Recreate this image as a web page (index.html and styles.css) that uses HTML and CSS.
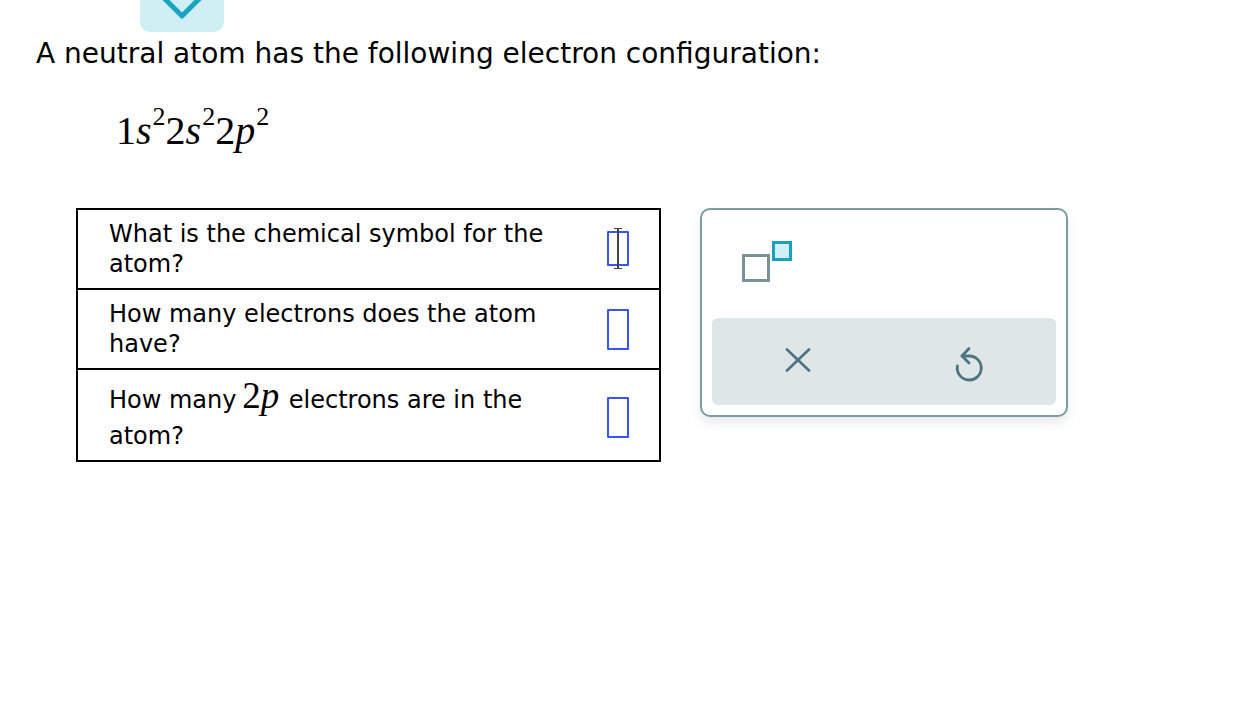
FILE: index.html
```html
<!DOCTYPE html>
<html>
<head>
<meta charset="utf-8">
<link rel="stylesheet" href="styles.css">
</head>
<body>
<div class="page">
  <div class="toggle">
    <svg width="44" height="26" viewBox="0 0 44 26"><path d="M4 -2 L22 16 L40 -2" fill="none" stroke="#1aa3c2" stroke-width="5" stroke-linecap="round" stroke-linejoin="round"/></svg>
  </div>
  <p class="intro">A neutral atom has the following electron configuration:</p>
  <div class="config"><span class="n">1</span><i>s</i><sup>2</sup><span class="n">2</span><i>s</i><sup>2</sup><span class="n">2</span><i>p</i><sup>2</sup></div>
  <div class="work">
    <table class="qs">
      <tr class="r1">
        <td class="q">What is the chemical symbol for the atom?</td>
        <td class="a"><span class="box active"><span class="caret"></span></span></td>
      </tr>
      <tr class="r2">
        <td class="q">How many electrons does the atom have?</td>
        <td class="a"><span class="box"></span></td>
      </tr>
      <tr class="r3">
        <td class="q">How many <span class="m"><span class="n">2</span><i>p</i></span> electrons are in the atom?</td>
        <td class="a"><span class="box"></span></td>
      </tr>
    </table>
    <div class="panel">
      <div class="tools">
        <span class="sup-icon"><span class="big"></span><span class="small"></span></span>
      </div>
      <div class="actions">
        <svg class="x" width="26" height="24" viewBox="0 0 26 24"><path d="M2 1.5 L24 22.5 M24 1.5 L2 22.5" stroke="#4b7380" stroke-width="2.6" stroke-linecap="round"/></svg>
        <svg class="undo" width="30" height="38" viewBox="0 0 30 38"><path d="M8 11 H15 A12 12 0 1 1 3.4 21" fill="none" stroke="#4b7380" stroke-width="2.8" stroke-linecap="round"/><path d="M15 3.5 L8 11 L15 18" fill="none" stroke="#4b7380" stroke-width="2.8" stroke-linecap="round" stroke-linejoin="round"/></svg>
      </div>
    </div>
  </div>
</div>
</body>
</html>
```

FILE: styles.css
```css
html, body {
  margin: 0;
  padding: 0;
  background: #fff;
}
body {
  font-family: "DejaVu Sans", Verdana, sans-serif;
  color: #000;
}
.page {
  padding: 0 0 0 36px;
  position: relative;
}
.toggle {
  position: absolute;
  left: 140px;
  top: -12px;
  width: 84px;
  height: 44px;
  background: #cfeff4;
  border-radius: 10px;
  display: flex;
  justify-content: center;
  align-items: flex-start;
  overflow: hidden;
}
.toggle svg {
  margin-top: 12px;
}
.intro {
  margin: 0;
  padding-top: 37px;
  font-size: 28px;
  line-height: 34px;
}
.config {
  font-family: "Liberation Serif", "Times New Roman", serif;
  font-size: 40px;
  margin: 38px 0 0 80px;
  line-height: 44px;
  height: 44px;
}
.config i, .m i {
  font-style: italic;
}
.config sup {
  font-size: 26px;
  vertical-align: baseline;
  position: relative;
  top: -19px;
  line-height: 0;
  margin-left: 1px;
}
.work {
  display: flex;
  align-items: flex-start;
  margin-top: 55px;
  margin-left: 40px;
}
.qs {
  border-collapse: collapse;
  border: 2px solid #000;
  width: 585px;
  table-layout: fixed;
}
.qs td {
  padding: 0;
  vertical-align: middle;
}
.qs tr {
  border-bottom: 2px solid #000;
}
.qs .q {
  font-size: 24px;
  line-height: 30px;
  padding-left: 31px;
  padding-right: 10px;
  width: 488px;
}
.r1 {
  height: 80px;
}
.r2 {
  height: 80px;
}
.r3 {
  height: 92px;
}
.r3 .q {
  line-height: 36px;
}
.m {
  font-family: "Liberation Serif", "Times New Roman", serif;
  font-size: 37px;
  line-height: 1;
  margin-left: -2px;
  margin-right: 2px;
}
.qs .a {
  padding-left: 0;
}
.box {
  display: block;
  width: 18px;
  height: 37px;
  border: 2px solid #3a55f5;
  border-radius: 1px;
  position: relative;
}
.box.active {
  height: 31px;
}
.r1 .box { margin-top: -2px; }
.r3 .box { margin-top: 4px; }
.caret {
  position: absolute;
  left: 8px;
  top: -5px;
  width: 2px;
  height: 41px;
  background: #444;
}
.caret::before, .caret::after {
  content: "";
  position: absolute;
  left: -3px;
  width: 8px;
  height: 1px;
  background: #444;
}
.caret::before { top: 0; }
.caret::after { bottom: 0; }
.panel {
  margin-left: 39px;
  margin-top: 0;
  width: 368px;
  height: 209px;
  border: 2px solid #7d9ba2;
  border-radius: 10px;
  box-sizing: border-box;
  box-shadow: 0 6px 10px rgba(120, 140, 150, 0.18);
  padding: 0 10px 10px 10px;
  display: flex;
  flex-direction: column;
}
.tools {
  height: 108px;
  padding-left: 30px;
  padding-top: 31px;
  box-sizing: border-box;
}
.sup-icon {
  display: block;
  position: relative;
  width: 52px;
  height: 42px;
}
.sup-icon .big {
  position: absolute;
  left: 0;
  top: 13px;
  width: 22px;
  height: 22px;
  border: 3px solid #78939a;
  background: #fff;
}
.sup-icon .small {
  position: absolute;
  left: 30px;
  top: 0;
  width: 14px;
  height: 14px;
  border: 3px solid #1a9fbc;
  background: #d0f0f5;
}
.actions {
  height: 88px;
  background: #dfe6e8;
  border-radius: 6px;
  display: flex;
  align-items: center;
  justify-content: space-between;
  padding: 0 72px 0 73px;
}
.actions .x { margin-top: -3px; }
.actions .undo { margin-top: 6px; }
```
